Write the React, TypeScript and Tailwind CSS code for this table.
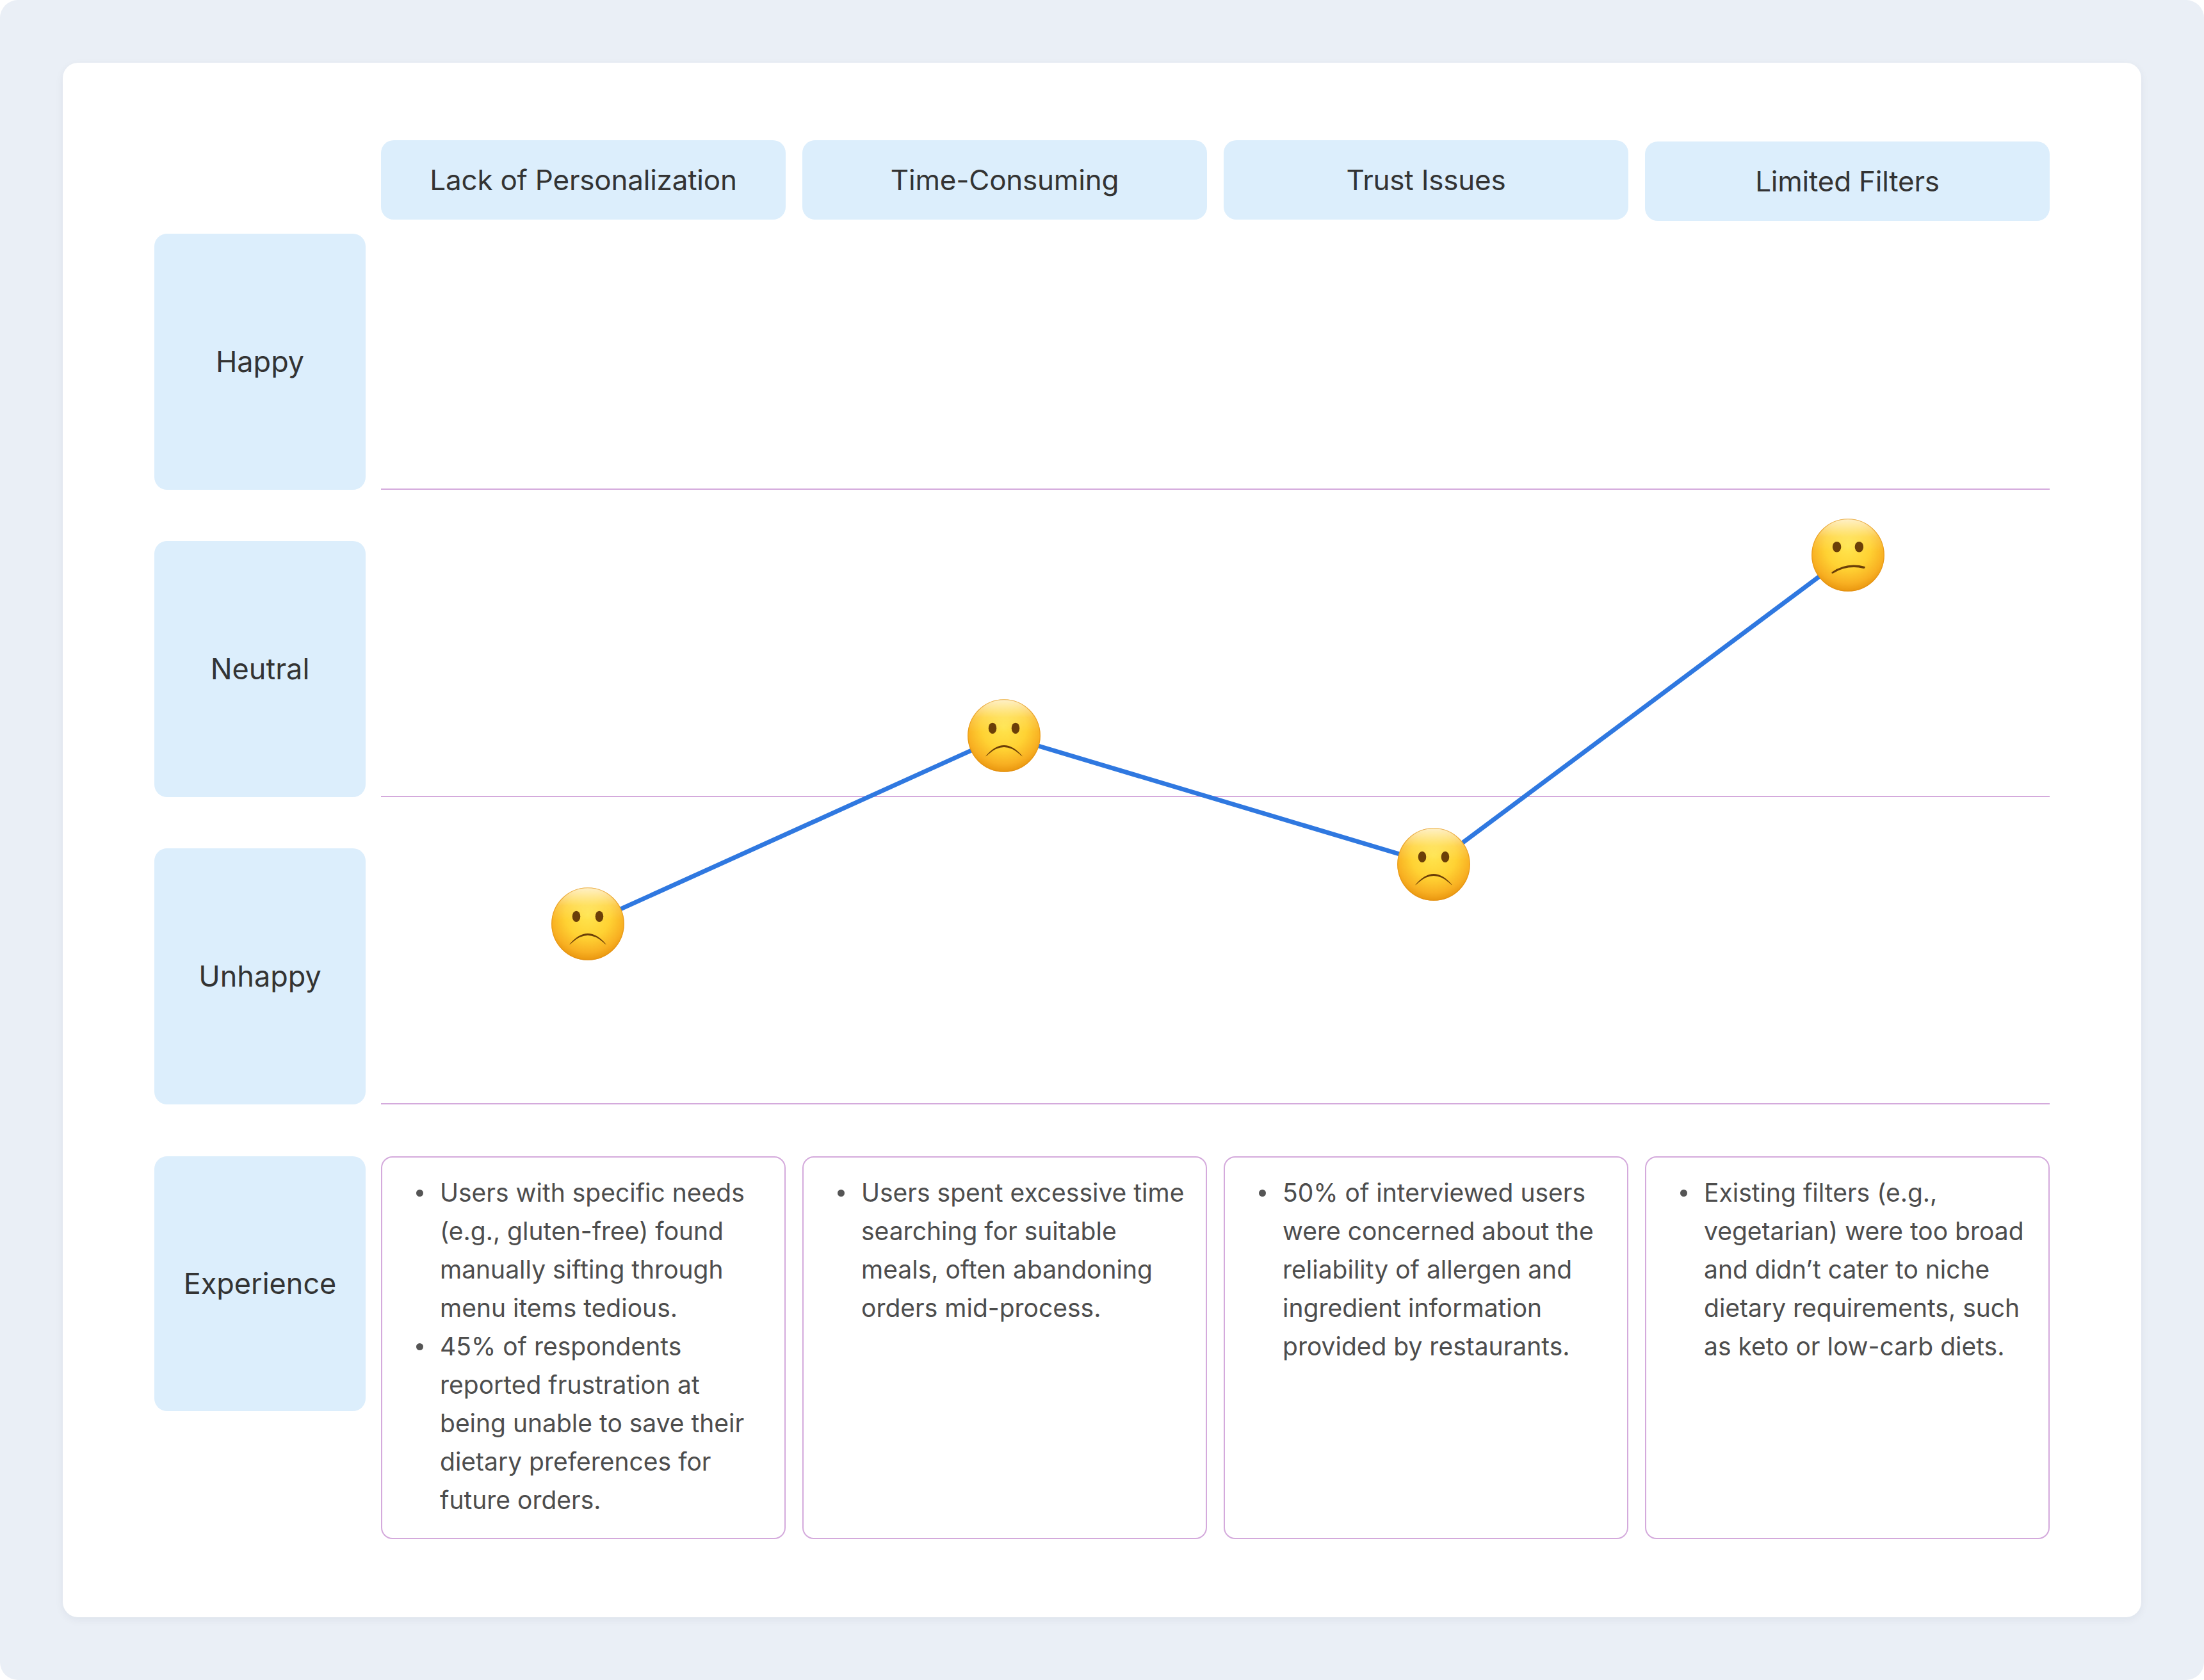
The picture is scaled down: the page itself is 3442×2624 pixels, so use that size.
import React from "react";

type Mood = "frown" | "confused";

const stages = [
  "Lack of Personalization",
  "Time-Consuming",
  "Trust Issues",
  "Limited Filters",
];

const moods = ["Happy", "Neutral", "Unhappy"];

const experience: string[][] = [
  [
    "Users with specific needs (e.g., gluten-free) found manually sifting through menu items tedious.",
    "45% of respondents reported frustration at being unable to save their dietary preferences for future orders.",
  ],
  [
    "Users spent excessive time searching for suitable meals, often abandoning orders mid-process.",
  ],
  [
    "50% of interviewed users were concerned about the reliability of allergen and ingredient information provided by restaurants.",
  ],
  [
    "Existing filters (e.g., vegetarian) were too broad and didn\u2019t cater to niche dietary requirements, such as keto or low-carb diets.",
  ],
];

// chart points, px inside the mood rows area
const points: { x: number; y: number; mood: Mood }[] = [
  { x: 323, y: 1078, mood: "frown" },
  { x: 973, y: 784, mood: "frown" },
  { x: 1644, y: 985, mood: "frown" },
  { x: 2291, y: 502, mood: "confused" },
];

const Face = ({ x, y, mood }: { x: number; y: number; mood: Mood }) => (
  <g transform={`translate(${x - 58} ${y - 58}) scale(1.16)`}>
    <circle cx="50" cy="50" r="49" fill="url(#faceFill)" />
    <circle cx="50" cy="50" r="49" fill="url(#faceShine)" />
    <circle cx="50" cy="50" r="48.5" fill="none" stroke="#E08C10" strokeWidth="1" opacity="0.6" />
    {mood === "frown" ? (
      <>
        <ellipse cx="34.5" cy="40" rx="5.4" ry="7.4" fill="#6B3F08" />
        <ellipse cx="65.5" cy="40" rx="5.4" ry="7.4" fill="#6B3F08" />
        <path d="M25 78 Q50 48 75 78 Q73 77.5 71 75 Q50 56 29 75 Q27 77.5 25 78 Z" fill="#6B3F08" />
      </>
    ) : (
      <>
        <ellipse cx="35" cy="39" rx="5.8" ry="7.2" fill="#6B3F08" />
        <ellipse cx="65" cy="39" rx="5.8" ry="7.2" fill="#6B3F08" />
        <path d="M28 73 Q48 59 73 65.5 Q73.5 68 71 68 Q49 63 30 74.5 Q27.5 75.5 28 73 Z" fill="#6B3F08" />
      </>
    )}
  </g>
);

export default function App() {
  const linePath = points.map((p, i) => `${i === 0 ? "M" : "L"}${p.x} ${p.y}`).join(" ");

  return (
    <div className="w-[3442px] h-[2624px] bg-white font-['Inter','Noto_Sans',sans-serif]">
      <div className="h-full rounded-[28px] bg-[#EAEFF6] p-[98px]">
        <div className="h-full rounded-[24px] bg-white pt-[121px] pl-[143px] shadow-[0_4px_14px_rgba(15,30,60,0.06)]">
          {/* stage headers */}
          <div className="flex">
            <div className="w-[330px] shrink-0" />
            <div className="ml-[24px] grid w-[2606px] grid-cols-4 items-start gap-x-[26px]">
              {stages.map((s, i) => (
                <div
                  key={s}
                  className={`flex h-[124px] items-center justify-center rounded-[20px] bg-[#DCEEFC] text-[44px] tracking-[-0.005em] text-[#333333] ${
                    i === 3 ? "mt-[2px]" : ""
                  }`}
                >
                  {s}
                </div>
              ))}
            </div>
          </div>

          {/* mood rows with the journey line */}
          <div className="relative mt-[20px] flex flex-col gap-[80px]">
            {moods.map((m) => (
              <div key={m} className="flex">
                <div className="flex h-[400px] w-[330px] shrink-0 items-center justify-center rounded-[20px] bg-[#DCEEFC] text-[45px] text-[#333333]">
                  {m}
                </div>
                <div className="ml-[24px] h-[400px] w-[2606px] border-b-2 border-[#D4AADC]" />
              </div>
            ))}
            <svg
              className="absolute left-[354px] top-0"
              width="2606"
              height="1360"
              viewBox="0 0 2606 1360"
            >
              <defs>
                <radialGradient id="faceFill" cx="50%" cy="38%" r="62%">
                  <stop offset="0%" stopColor="#FFE54F" />
                  <stop offset="50%" stopColor="#FFD233" />
                  <stop offset="82%" stopColor="#F8B022" />
                  <stop offset="100%" stopColor="#E9960F" />
                </radialGradient>
                <linearGradient id="faceShine" x1="0" y1="0" x2="0" y2="1">
                  <stop offset="0%" stopColor="#FFFFFF" stopOpacity="0.75" />
                  <stop offset="25%" stopColor="#FFFFFF" stopOpacity="0.15" />
                  <stop offset="45%" stopColor="#FFFFFF" stopOpacity="0" />
                </linearGradient>
              </defs>
              <path d={linePath} fill="none" stroke="#2F78E0" strokeWidth="7" strokeLinejoin="round" />
              {points.map((p, i) => (
                <Face key={i} x={p.x} y={p.y} mood={p.mood} />
              ))}
            </svg>
          </div>

          {/* experience row */}
          <div className="mt-[81px] flex">
            <div className="flex h-[398px] w-[330px] shrink-0 items-center justify-center rounded-[20px] bg-[#DCEEFC] text-[45px] text-[#333333]">
              Experience
            </div>
            <div className="ml-[24px] grid w-[2606px] grid-cols-4 gap-x-[26px]">
              {experience.map((items, i) => (
                <div
                  key={i}
                  className="h-[598px] rounded-[18px] border-2 border-[#D4AADC] pl-[90px] pt-[25px]"
                >
                  <ul className="w-[512px] text-[39px] leading-[60px] text-[#4D4D4D]">
                    {items.map((t) => (
                      <li key={t} className="relative">
                        <span className="absolute left-[-37px] top-[25px] h-[11px] w-[11px] rounded-full bg-[#555555]" />
                        {t}
                      </li>
                    ))}
                  </ul>
                </div>
              ))}
            </div>
          </div>
        </div>
      </div>
    </div>
  );
}
